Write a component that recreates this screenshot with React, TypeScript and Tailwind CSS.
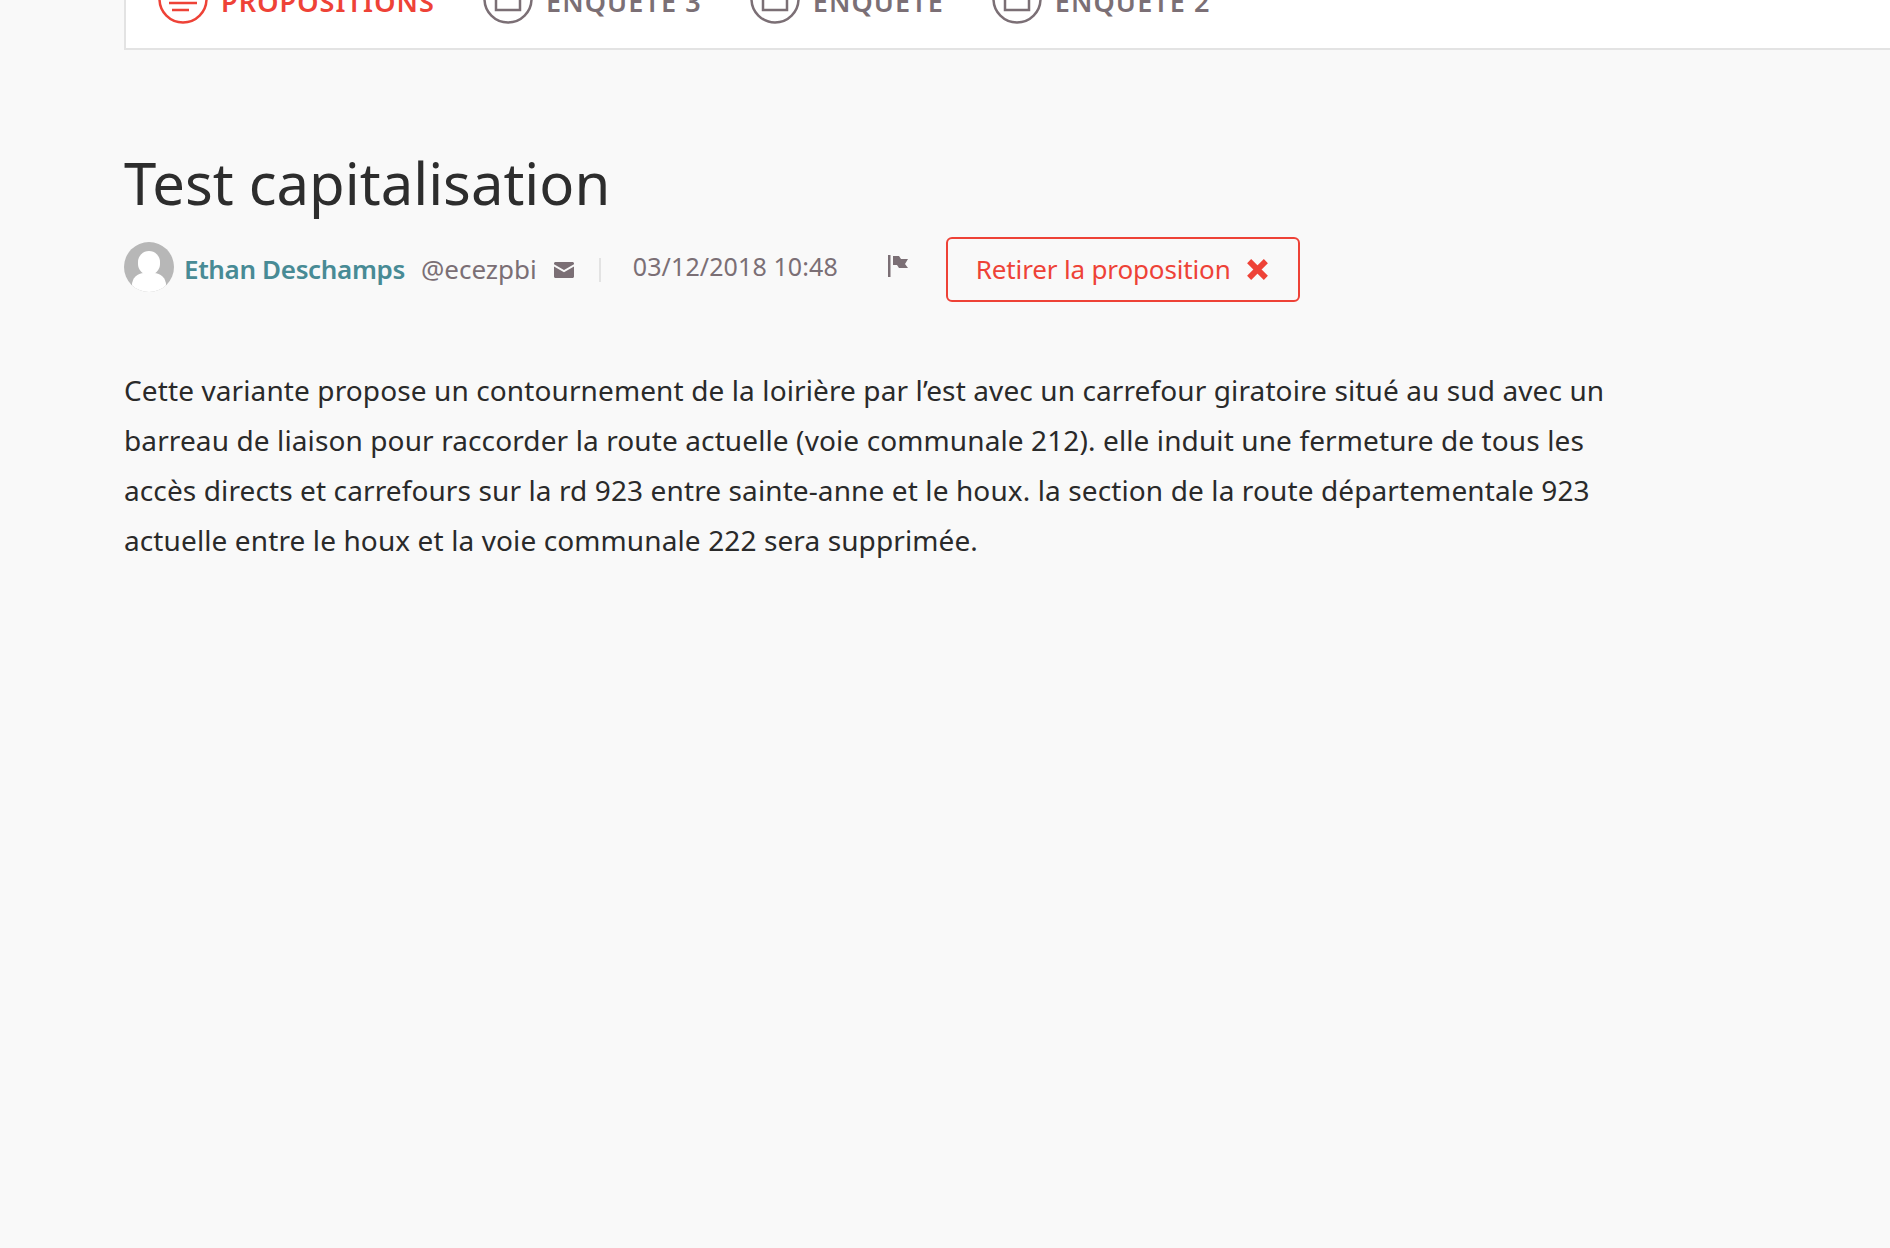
const font = { fontFamily: '"Noto Sans", sans-serif' };

function ListIcon() {
  return (
    <svg width="50" height="50" viewBox="0 0 50 50" fill="none" stroke="#ee4237" strokeWidth="2.5">
      <circle cx="25" cy="25" r="23.5" />
      <path d="M11 22h28M11 29h28M14 36h17" />
    </svg>
  );
}

function FormIcon() {
  return (
    <svg width="50" height="50" viewBox="0 0 50 50" fill="none" stroke="#7b6f75" strokeWidth="2.5">
      <circle cx="25" cy="25" r="23.5" />
      <path d="M13 10h24v26H13z" />
    </svg>
  );
}

function Tab({ label, active }: { label: string; active?: boolean }) {
  return (
    <div className="flex items-center gap-[13px]">
      {active ? <ListIcon /> : <FormIcon />}
      <span className={`mt-[6px] text-[27px] font-semibold tracking-[1.1px] ${active ? 'text-[#ee4237]' : 'text-[#7b6f75]'}`}>{label}</span>
    </div>
  );
}

export default function App() {
  return (
    <div className="min-h-[1248px] bg-[#f9f9f9] pl-[124px] overflow-hidden" style={font}>
      <div className="h-[50px] bg-white border-l-2 border-b-2 border-[#e3e3e3] flex items-end pb-[24px] pl-[32px] gap-[48px]">
        <Tab label="PROPOSITIONS" active />
        <Tab label="ENQUÊTE 3" />
        <Tab label="ENQUÊTE" />
        <Tab label="ENQUÊTE 2" />
      </div>
      <h1 className="mt-[97px] text-[58px] leading-[72px] text-[#2d2d2d]">Test capitalisation</h1>
      <div className="mt-[18px] flex items-center h-[65px]">
        <div className="relative -mt-[6px] w-[50px] h-[50px] rounded-full bg-[#b7b7b7] overflow-hidden">
          <div className="absolute left-[14px] top-[9px] w-[22px] h-[24px] rounded-full bg-white" />
          <div className="absolute left-[8px] top-[31px] w-[34px] h-[24px] rounded-full bg-white" />
        </div>
        <span className="ml-[10px] text-[26px] font-semibold text-[#488b95] tracking-[-0.35px]">Ethan Deschamps</span>
        <span className="ml-[16px] text-[26px] text-[#7b6f75]">@ecezpbi</span>
        <svg className="ml-[17px]" width="20" height="16" viewBox="0 0 20 16" fill="#7b6f75">
          <path d="M0 1.5C0 .7.7 0 1.5 0h17c.8 0 1.5.7 1.5 1.5v.8L10 8 0 2.3zM0 4.6V14.5c0 .8.7 1.5 1.5 1.5h17c.8 0 1.5-.7 1.5-1.5V4.6l-10 5.7z" />
        </svg>
        <div className="ml-[25px] w-[2px] h-[24px] bg-[#e3e3e3]" />
        <span className="ml-[32px] -mt-[6px] text-[25px] text-[#7b6f75] tracking-[0.1px]">03/12/2018 10:48</span>
        <svg className="ml-[50px] -mt-[8px]" width="20" height="22" viewBox="0 0 20 22" fill="#7b6f75">
          <rect x="0" y="0" width="2.5" height="22" />
          <path d="M5 1h6l2 3h7l-3 5 3 4h-9l-2-3H5z" />
        </svg>
        <button className="ml-[38px] h-[65px] w-[354px] rounded-[6px] border-2 border-[#ee4237] flex items-center pl-[28px] gap-[15px] text-[26px] text-[#ee4237] bg-transparent tracking-[-0.15px]">
          Retirer la proposition
          <svg width="23" height="23" viewBox="0 0 22 22" fill="none" stroke="#ee4237" strokeWidth="5.5">
            <path d="M3 3l16 16M19 3L3 19" />
          </svg>
        </button>
      </div>
      <p className="mt-[63px] text-[28px] leading-[50px] text-[#2a2a2a] tracking-[0.11px]">
        Cette variante propose un contournement de la loirière par l’est avec un carrefour giratoire situé au sud avec un
        <br />
        barreau de liaison pour raccorder la route actuelle (voie communale 212). elle induit une fermeture de tous les
        <br />
        accès directs et carrefours sur la rd 923 entre sainte-anne et le houx. la section de la route départementale 923
        <br />
        actuelle entre le houx et la voie communale 222 sera supprimée.
      </p>
    </div>
  );
}
